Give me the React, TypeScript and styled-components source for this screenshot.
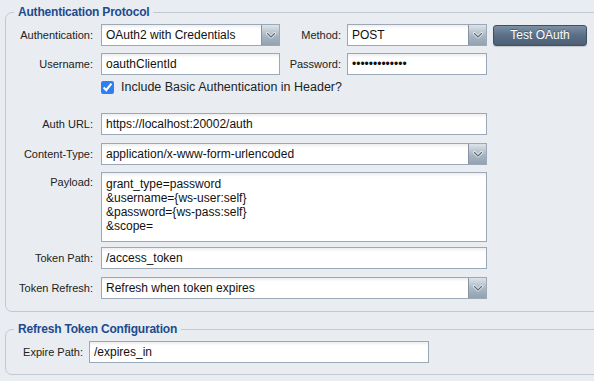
import React from "react";
import styled, { createGlobalStyle } from "styled-components";

const GlobalStyle = createGlobalStyle`
  html, body {
    margin: 0;
    padding: 0;
    background: #e9edf1;
    overflow: hidden;
  }
  body {
    font-family: "Liberation Sans", Arial, sans-serif;
    color: #222;
  }
`;

const Page = styled.div`
  width: 594px;
  height: 381px;
  padding: 5px 0 0 5px;
  box-sizing: border-box;
  overflow: hidden;
`;

const Fieldset = styled.fieldset<{ $top?: number; $bottom?: number }>`
  width: 640px;
  margin: ${(p) => p.$top ?? 0}px 0 0 0;
  padding: 5px 0 ${(p) => p.$bottom ?? 12}px 8px;
  border: 1px solid #c2c9d1;
  border-radius: 7px;
  box-sizing: border-box;
  display: flex;
  flex-direction: column;
`;

const Legend = styled.legend`
  padding: 0 4px;
  font-size: 12px;
  line-height: 14px;
  font-weight: bold;
  color: #1d4a8e;
  letter-spacing: -0.2px;
`;

const Row = styled.div<{ $top?: number }>`
  display: flex;
  align-items: center;
  margin-top: ${(p) => p.$top ?? 0}px;
`;

const Label = styled.label<{ $w: number; $pad?: number; $alignTop?: boolean }>`
  width: ${(p) => p.$w}px;
  padding-right: ${(p) => p.$pad ?? 8}px;
  box-sizing: border-box;
  text-align: right;
  font-size: 11px;
  color: #222;
  flex: none;
  align-self: ${(p) => (p.$alignTop ? "flex-start" : "center")};
  padding-top: ${(p) => (p.$alignTop ? 4 : 0)}px;
`;

const fieldLook = `
  border: 1px solid #9aa8b7;
  background: #fff;
  box-shadow: inset 0 3px 3px -1px rgba(0, 0, 0, 0.07);
  box-sizing: border-box;
  font-family: "Liberation Sans", Arial, sans-serif;
  font-size: 12px;
  color: #111;
`;

const TextInput = styled.input<{ $w: number }>`
  ${fieldLook}
  width: ${(p) => p.$w}px;
  height: 22px;
  padding: 0 4px;
  margin: 0;
  outline: none;
  flex: none;
`;

const SelectBox = styled.div<{ $w: number }>`
  ${fieldLook}
  width: ${(p) => p.$w}px;
  height: 22px;
  display: flex;
  align-items: center;
  flex: none;
`;

const SelectValue = styled.span`
  flex: 1;
  padding-left: 4px;
  white-space: nowrap;
  overflow: hidden;
`;

const ArrowButton = styled.span`
  width: 17px;
  height: 20px;
  border-left: 1px solid #8593a3;
  background: linear-gradient(#dde3e9, #a9b5c2 55%, #93a1b0);
  display: flex;
  align-items: center;
  justify-content: center;
  flex: none;
`;

const PayloadArea = styled.textarea`
  ${fieldLook}
  width: 386px;
  height: 70px;
  padding: 4px 4px;
  margin: 0;
  line-height: 14px;
  resize: none;
  outline: none;
  overflow: hidden;
  flex: none;
`;

const Button = styled.button`
  width: 94px;
  height: 21px;
  margin-left: 6px;
  border: 1px solid #3f5064;
  border-radius: 3px;
  background: linear-gradient(#7b8fa5, #5a6e85 50%, #4c5f75);
  color: #fff;
  font-family: "Liberation Sans", Arial, sans-serif;
  font-size: 12px;
  text-shadow: 0 -1px 0 rgba(0, 0, 0, 0.3);
  box-shadow: 0 1px 1px rgba(0, 0, 0, 0.15);
  padding: 0;
  flex: none;
`;

const CheckRow = styled.label`
  display: flex;
  align-items: center;
  gap: 7px;
  height: 14px;
  margin-left: 87px;
  font-size: 12.5px;
  color: #222;
`;

const CheckBox = styled.input`
  width: 13px;
  height: 13px;
  margin: 0;
  accent-color: #2f7ff0;
`;

const Chevron = () => (
  <svg width="10" height="7" viewBox="0 0 10 7">
    <path d="M1.5 1.5 L5 5 L8.5 1.5" fill="none" stroke="#fff" strokeWidth="2.6" strokeLinecap="round" strokeLinejoin="round" />
    <path d="M1.5 1.5 L5 5 L8.5 1.5" fill="none" stroke="#5e6b79" strokeWidth="1.4" strokeLinecap="round" strokeLinejoin="round" />
  </svg>
);

const Select = ({ value, w }: { value: string; w: number }) => (
  <SelectBox $w={w}>
    <SelectValue>{value}</SelectValue>
    <ArrowButton>
      <Chevron />
    </ArrowButton>
  </SelectBox>
);

const payload = "grant_type=password\n&username={ws-user:self}\n&password={ws-pass:self}\n&scope=";

export default function App() {
  return (
    <>
      <GlobalStyle />
      <Page>
        <Fieldset>
          <Legend>Authentication Protocol</Legend>
          <Row>
            <Label $w={87}>Authentication:</Label>
            <Select value="OAuth2 with Credentials" w={179} />
            <Label $w={67} $pad={6}>Method:</Label>
            <Select value="POST" w={140} />
            <Button>Test OAuth</Button>
          </Row>
          <Row $top={7}>
            <Label $w={87}>Username:</Label>
            <TextInput $w={179} defaultValue="oauthClientId" />
            <Label $w={67} $pad={6}>Password:</Label>
            <TextInput $w={140} type="password" defaultValue="secretpasswd1" />
          </Row>
          <Row $top={5}>
            <CheckRow>
              <CheckBox type="checkbox" defaultChecked />
              Include Basic Authentication in Header?
            </CheckRow>
          </Row>
          <Row $top={19}>
            <Label $w={87}>Auth URL:</Label>
            <TextInput $w={386} defaultValue="https://localhost:20002/auth" />
          </Row>
          <Row $top={8}>
            <Label $w={87}>Content-Type:</Label>
            <Select value="application/x-www-form-urlencoded" w={386} />
          </Row>
          <Row $top={7}>
            <Label $w={87} $alignTop>Payload:</Label>
            <PayloadArea defaultValue={payload} />
          </Row>
          <Row $top={5}>
            <Label $w={87}>Token Path:</Label>
            <TextInput $w={386} defaultValue="/access_token" />
          </Row>
          <Row $top={8}>
            <Label $w={87}>Token Refresh:</Label>
            <Select value="Refresh when token expires" w={386} />
          </Row>
        </Fieldset>
        <Fieldset $top={10} $bottom={11}>
          <Legend>Refresh Token Configuration</Legend>
          <Row>
            <Label $w={75} $pad={6}>Expire Path:</Label>
            <TextInput $w={340} defaultValue="/expires_in" />
          </Row>
        </Fieldset>
      </Page>
    </>
  );
}
